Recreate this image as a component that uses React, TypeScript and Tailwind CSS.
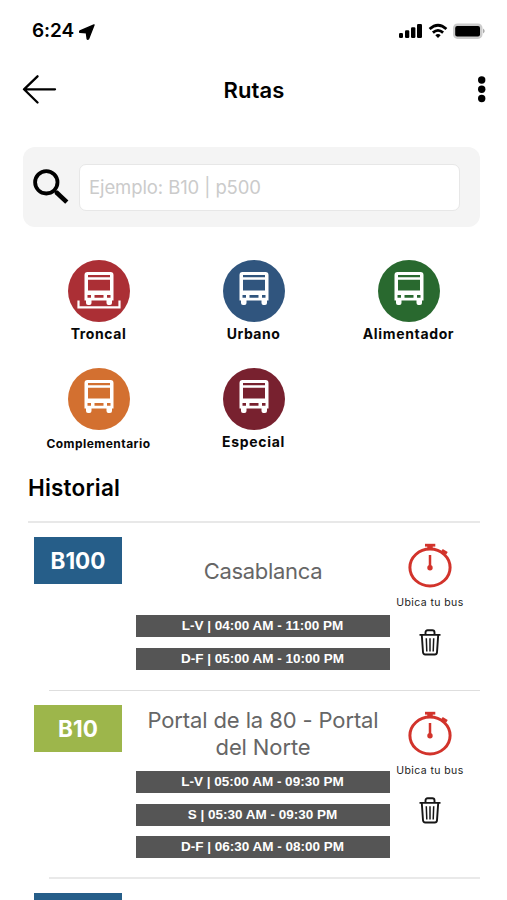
import React from "react";

function Bus({ station = false }: { station?: boolean }) {
  return (
    <svg className="block h-[62px] w-[62px]" viewBox="0 0 62 62" fill="#fff">
      <path
        fillRule="evenodd"
        d="M19.5 12H42.5Q45.5 12 45.5 15V40.5H44V43Q44 45 42 45H40.5Q38.5 45 38.5 43V40.5H23.5V43Q23.5 45 21.5 45H20Q18 45 18 43V40.5H16.5V15Q16.5 12 19.5 12ZM20 15V17.3H42V15ZM20 19.8V30.5H42V19.8ZM19.5 35V37.8H23V35ZM26.5 35V37.8H35.5V35ZM39 35V37.8H42.5V35Z"
      />
      {station && <path d="M10.5 40.5V47.3H51.5V40.5" fill="none" stroke="#fff" strokeWidth="2.2" />}
    </svg>
  );
}

function Category({ label, color, text, station }: { label: string; color: string; text: string; station?: boolean }) {
  return (
    <div className="flex h-[108px] flex-col items-center">
      <div className={`h-[62px] w-[62px] shrink-0 rounded-full ${color}`}>
        <Bus station={station} />
      </div>
      <div className={`font-bold whitespace-nowrap text-[#080808] ${text}`}>{label}</div>
    </div>
  );
}

function Stopwatch() {
  return (
    <svg className="block h-[45px] w-[46px] shrink-0" viewBox="0 0 46 45" fill="none" stroke="#d2332b">
      <ellipse cx="23" cy="24.5" rx="20.1" ry="18.4" strokeWidth="3" />
      <path d="M18 2.2H28.3" strokeWidth="2.8" />
      <path d="M23 3V6" strokeWidth="5.5" />
      <path d="M35 7.2L40 10.2M37.2 9L35.5 11" strokeWidth="2.8" />
      <path d="M23 12V25" strokeWidth="2.5" />
      <circle cx="23" cy="24.7" r="2.7" fill="#d2332b" stroke="none" />
    </svg>
  );
}

function Trash() {
  return (
    <svg className="block h-[27px] w-[22px] shrink-0" viewBox="0 0 22 27" fill="none" stroke="#161616" strokeWidth="1.9">
      <path d="M.5 5.9H21.5M6.5 5.5V3.5Q6.5 1.3 8.7 1.3H13.3Q15.5 1.3 15.5 3.5V5.5" />
      <path d="M2.8 6L4 23.3Q4.2 25.5 6.3 25.5H15.7Q17.8 25.5 18 23.3L19.2 6" />
      <path d="M7.3 9.3L7.8 22.5M11 9.3V22.5M14.7 9.3L14.2 22.5" strokeWidth="1.5" />
    </svg>
  );
}

type Route = {
  code: string;
  badge: string;
  row: string;
  title: string;
  name: React.ReactNode;
  action: string;
  hours: string[];
};

const routes: Route[] = [
  {
    code: "B100",
    badge: "bg-[#265e89]",
    row: "h-[168px]",
    title: "pt-[35px] h-[92px] tracking-[-0.3px]",
    name: "Casablanca",
    action: "pt-[20px]",
    hours: ["L-V | 04:00 AM - 11:00 PM", "D-F | 05:00 AM - 10:00 PM"],
  },
  {
    code: "B10",
    badge: "bg-[#9db64b]",
    row: "h-[188px]",
    title: "pt-[16px] h-[80px] tracking-[-0.12px]",
    name: (
      <>
        Portal de la 80 - Portal
        <br />
        del Norte
      </>
    ),
    action: "pt-[20px]",
    hours: ["L-V | 05:00 AM - 09:30 PM", "S | 05:30 AM - 09:30 PM", "D-F | 06:30 AM - 08:00 PM"],
  },
];

function RouteRow({ route }: { route: Route }) {
  return (
    <div className={`flex pl-[34px] ${route.row}`}>
      <div className={`mt-[14px] flex h-[47px] w-[88px] shrink-0 items-center justify-center text-[22.5px] font-bold text-white ${route.badge}`}>
        {route.code}
      </div>
      <div className="ml-[14px] w-[254px] shrink-0">
        <div className={`text-center text-[22px] leading-[27px] whitespace-nowrap text-[#666] ${route.title}`}>{route.name}</div>
        <div className="flex flex-col gap-[10.5px]">
          {route.hours.map((h) => (
            <div
              key={h}
              className="flex h-[22px] items-center justify-center bg-[#555] pt-[1px] pr-[1px] font-['Liberation_Sans',sans-serif] text-[13.5px] font-bold whitespace-nowrap text-white"
            >
              {h}
            </div>
          ))}
        </div>
      </div>
      <div className={`flex w-[80px] shrink-0 flex-col items-center ${route.action}`}>
        <Stopwatch />
        <div className="mt-[8px] h-[14px] text-[10.5px] leading-[14px] tracking-[0.4px] whitespace-nowrap text-[#222]">Ubica tu bus</div>
        <div className="mt-[19px] mr-[1px]">
          <Trash />
        </div>
      </div>
    </div>
  );
}

export default function App() {
  return (
    <div className="h-[900px] w-[507px] overflow-hidden bg-white font-['Inter','Liberation_Sans',sans-serif] text-black">
      <div className="flex h-[60px] items-center pl-[32px]">
        <span className="mt-[3px] text-[19px] font-semibold tracking-[-0.1px]">6:24</span>
        <svg className="mt-[3px] ml-[5px] h-[16px] w-[17px]" viewBox="0 0 17 16">
          <path d="M15 .9L1 7Q.3 8 1 8.4L7.4 8.9L8.2 14.8Q8.7 15.6 9.6 14.8Z" stroke="#000" strokeWidth="1.4" strokeLinejoin="round" />
        </svg>
        <div className="mt-[2px] ml-auto flex items-center pr-[21px]">
          <svg className="h-[16px] w-[25px]" viewBox="0 0 25 16">
            <rect x="0" y="10" width="4" height="5" rx="1.2" />
            <rect x="6" y="7.3" width="4.3" height="7.7" rx="1.2" />
            <rect x="12" y="4.3" width="4.4" height="10.7" rx="1.2" />
            <rect x="18" y="1" width="5" height="14" rx="1.2" />
          </svg>
          <svg className="ml-[4px] h-[16px] w-[20px]" viewBox="0 0 20 16" fill="none" stroke="#000" strokeWidth="2.8">
            <path d="M1.6 6Q10-1.6 18.4 6" />
            <path d="M4.9 9.6Q10 5.2 15.1 9.6" />
            <path d="M7.3 12.2Q10 10 12.7 12.2L10 15Z" fill="#000" stroke="none" />
          </svg>
          <svg className="ml-[5px] h-[18px] w-[33px]" viewBox="0 0 33 18">
            <rect x="0" y="1.5" width="29.5" height="15.4" rx="4.5" fill="#ccc" />
            <rect x="2.2" y="4" width="24.8" height="10.5" rx="2" />
            <path d="M30.2 6.5Q33 9 30.2 11.5Z" fill="#999" />
          </svg>
        </div>
      </div>
      <div className="grid h-[60px] grid-cols-[1fr_auto_1fr] items-center pr-[21px] pl-[22px]">
        <svg className="h-[30px] w-[35px]" viewBox="0 0 35 30" fill="none" stroke="#000" strokeWidth="2.3" strokeLinecap="round" strokeLinejoin="round">
          <path d="M15.5 1.3L2 14.3L15.5 27.5M2 14.3H33" />
        </svg>
        <h1 className="text-[22px] font-semibold tracking-[0.1px]">Rutas</h1>
        <svg className="h-[28px] w-[10px] justify-self-end" viewBox="0 0 10 28">
          <circle cx="5.7" cy="4" r="3.7" />
          <circle cx="5.7" cy="13.2" r="3.7" />
          <circle cx="5.7" cy="22.5" r="3.7" />
        </svg>
      </div>
      <div className="mt-[27px] ml-[23px] flex h-[80px] w-[457px] items-center rounded-[12px] bg-[#f4f4f4] pl-[9px]">
        <svg className="h-[38px] w-[38px] shrink-0" viewBox="0 0 38 38" fill="none" stroke="#000">
          <circle cx="14.3" cy="14.3" r="11.2" strokeWidth="3.8" />
          <path d="M22.5 22.5L25 25" strokeWidth="3" />
          <path d="M24 24L34.8 34.2" strokeWidth="4.6" />
        </svg>
        <div className="ml-[9px] flex h-[47px] w-[381px] items-center rounded-[7px] border-[1.5px] border-[#e7e7e7] bg-white pt-[2px] pl-[9px] text-[18.5px] tracking-[-0.1px] text-[#cbcbcb]">
          Ejemplo: B10 | p500
        </div>
      </div>
      <div className="mt-[33px] ml-[21px] grid h-[210px] w-[465px] grid-cols-3">
        <Category label="Troncal" color="bg-[#ab2f35]" text="text-[14px] leading-[24px] tracking-[0.6px]" station />
        <Category label="Urbano" color="bg-[#30557e]" text="text-[14px] leading-[24px] tracking-[0.5px]" />
        <Category label="Alimentador" color="bg-[#29692f]" text="text-[14px] leading-[24px] tracking-[0.65px]" />
        <Category label="Complementario" color="bg-[#d37030]" text="text-[12px] leading-[27px] tracking-[0.45px]" />
        <Category label="Especial" color="bg-[#78212f]" text="text-[14px] leading-[24px] tracking-[0.7px]" />
      </div>
      <h2 className="ml-[28px] h-[51px] pt-[1px] text-[22.5px] leading-[34px] font-semibold tracking-[0.2px]">Historial</h2>
      <div className="ml-[28px] h-[2px] w-[452px] bg-[#e8e8e8]" />
      <RouteRow route={routes[0]} />
      <div className="-mt-px ml-[49px] h-px w-[431px] bg-[#dedede]" />
      <RouteRow route={routes[1]} />
      <div className="-mt-[2px] ml-[49px] h-[2px] w-[431px] bg-[#e9e9e9]" />
      <div className="mt-[14px] ml-[34px] h-[47px] w-[88px] bg-[#265e89]" />
    </div>
  );
}
